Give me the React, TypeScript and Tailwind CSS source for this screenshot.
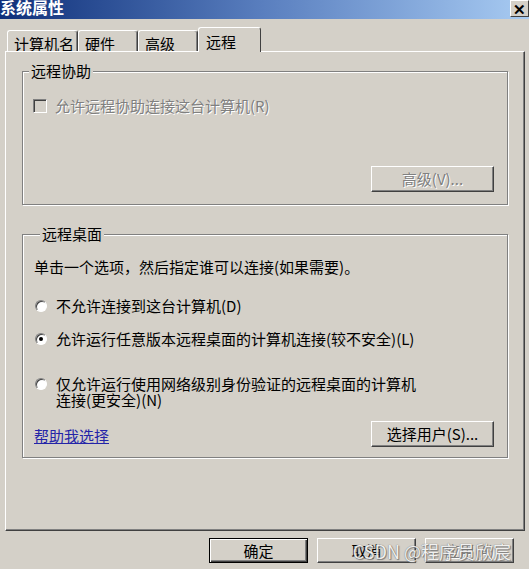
import { type ReactNode } from "react";

const disabledText = "text-[#808080] [text-shadow:1px_1px_0_#fff]";

function Button({
  children,
  className = "",
  isDefault = false,
  disabled = false,
}: {
  children: ReactNode;
  className?: string;
  isDefault?: boolean;
  disabled?: boolean;
}) {
  const frame = isDefault
    ? "border border-black shadow-[inset_1px_1px_0_#fff,inset_-1px_-1px_0_#404040,inset_-2px_-2px_0_#808080]"
    : "border border-t-white border-l-white border-r-[#404040] border-b-[#404040] shadow-[inset_-1px_-1px_0_#808080]";
  return (
    <div
      className={`flex items-center justify-center bg-[#d4d0c8] leading-4 ${frame} ${
        disabled ? disabledText : "text-black"
      } ${className}`}
    >
      {children}
    </div>
  );
}

function Radio({ checked = false }: { checked?: boolean }) {
  return (
    <span className="flex h-[12px] w-[12px] shrink-0 items-center justify-center rounded-full border border-t-[#808080] border-l-[#808080] border-r-white border-b-white bg-white shadow-[inset_1px_1px_0_#404040]">
      {checked && <span className="h-[4px] w-[4px] rounded-full bg-black" />}
    </span>
  );
}

function Tab({ label, w, active = false }: { label: string; w: string; active?: boolean }) {
  return (
    <div
      className={`flex items-start rounded-t-[3px] border-l border-t border-r border-l-white border-t-white border-r-[#404040] bg-[#d4d0c8] ${w} ${
        active
          ? "relative z-10 -mb-px h-[25px] pl-[7px] pt-[3px]"
          : "h-[21px] pl-[6px] pt-[2px] shadow-[inset_-1px_0_0_#808080]"
      }`}
    >
      {label}
    </div>
  );
}

function Group({ title, children, className = "" }: { title: string; children: ReactNode; className?: string }) {
  return (
    <fieldset
      className={`border border-[#808080] shadow-[inset_1px_1px_0_#fff,1px_1px_0_#fff] ${className}`}
    >
      <legend className="ml-[6px] bg-[#d4d0c8] px-[2px] leading-4">{title}</legend>
      {children}
    </fieldset>
  );
}

export default function App() {
  return (
    <div className="relative flex h-[569px] w-[529px] flex-col overflow-hidden bg-[#d4d0c8] font-['Noto_Sans_CJK_SC',sans-serif] text-[15px] text-black">
      <div className="flex h-[19px] shrink-0 items-start justify-between bg-gradient-to-r from-[#10307a] via-[#5a7fbf] to-[#a8cbf2]">
        <span className="-mt-[3px] text-[16px] font-bold leading-5 text-white">系统属性</span>
        <span className="flex h-[17px] w-[19px] items-center justify-center border border-t-white border-l-white border-r-[#404040] border-b-[#404040] bg-[#d4d0c8] text-[15px] font-bold leading-none">
          ✕
        </span>
      </div>

      <div className="mt-[8px] flex items-end pl-[7px]">
        <Tab label="计算机名" w="w-[71px]" />
        <Tab label="硬件" w="w-[60px]" />
        <Tab label="高级" w="w-[60px]" />
        <Tab label="远程" w="w-[63px]" active />
      </div>

      <div className="mx-[5px] flex h-[480px] w-[520px] flex-col border border-t-white border-l-white border-r-[#404040] border-b-[#404040] px-[16px] pt-[11px] shadow-[inset_-1px_-1px_0_#808080]">
        <Group title="远程协助" className="flex flex-col pb-[12px]">
          <div className="mt-[19px] flex items-center gap-[8px] pl-[10px] leading-4">
            <span className="h-[14px] w-[14px] border border-t-[#808080] border-l-[#808080] border-r-white border-b-white shadow-[inset_1px_1px_0_#404040]" />
            <span className={disabledText}>允许远程协助连接这台计算机(R)</span>
          </div>
          <div className="mt-[52px] flex justify-end pr-[13px]">
            <Button disabled className="h-[26px] w-[123px]">
              高级(V)...
            </Button>
          </div>
        </Group>

        <Group title="远程桌面" className="mt-[21px] flex flex-col pb-[10px] pl-[11px] pr-[13px] leading-4">
          <p className="mt-[17px]">单击一个选项，然后指定谁可以连接(如果需要)。</p>
          <div className="mt-[23px] flex items-center gap-[9px] pl-[1px]">
            <Radio />
            <span>不允许连接到这台计算机(D)</span>
          </div>
          <div className="mt-[17px] flex items-center gap-[9px] pl-[1px]">
            <Radio checked />
            <span>允许运行任意版本远程桌面的计算机连接(较不安全)(L)</span>
          </div>
          <div className="mt-[29px] flex items-start gap-[9px] pl-[1px]">
            <span className="mt-[2px]">
              <Radio />
            </span>
            <span>
              仅允许运行使用网络级别身份验证的远程桌面的计算机
              <br />
              连接(更安全)(N)
            </span>
          </div>
          <div className="mt-[13px] flex items-center justify-between">
            <a className="mt-[4px] text-[#2424a8] underline">帮助我选择</a>
            <Button className="h-[26px] w-[123px]">选择用户(S)...</Button>
          </div>
        </Group>
      </div>

      <div className="mt-[7px] flex justify-end gap-[9px] pr-[15px]">
        <Button isDefault className="h-[25px] w-[99px]">
          确定
        </Button>
        <Button className="h-[25px] w-[99px]">取消</Button>
        <Button disabled className="h-[25px] w-[89px]">
          应用(A)
        </Button>
      </div>

      <span className="absolute bottom-[6px] right-[18px] text-[18px] leading-6 text-[#f4f4f4] opacity-90 [text-shadow:0_0_1px_#555,1px_1px_1px_#777]">
        CSDN @程序员欣宸
      </span>
    </div>
  );
}
